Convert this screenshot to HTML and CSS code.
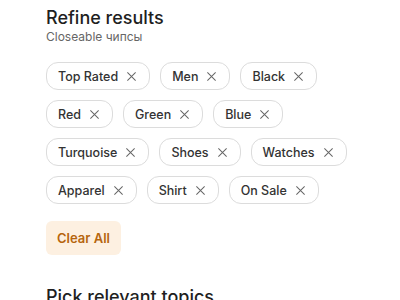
FILE: index.html
```html
<!DOCTYPE html>
<html lang="en">
<head>
  <meta charset="UTF-8" />
  <meta name="viewport" content="width=device-width, initial-scale=1.0"/>
  <title>Refine results</title>
  <link rel="stylesheet" href="styles.css">
</head>
<body>

<div class="section">
  <h2 class="section-title">Refine results</h2>
  <p class="section-sub">Closeable чипсы</p>

  <div class="chips">
    <span class="chip">Top Rated <svg class="chip-close" viewBox="0 0 12 12"><path d="M1.5 1.5l9 9M10.5 1.5l-9 9"/></svg></span>
    <span class="chip">Men <svg class="chip-close" viewBox="0 0 12 12"><path d="M1.5 1.5l9 9M10.5 1.5l-9 9"/></svg></span>
    <span class="chip">Black <svg class="chip-close" viewBox="0 0 12 12"><path d="M1.5 1.5l9 9M10.5 1.5l-9 9"/></svg></span>
    <span class="chip">Red <svg class="chip-close" viewBox="0 0 12 12"><path d="M1.5 1.5l9 9M10.5 1.5l-9 9"/></svg></span>
    <span class="chip">Green <svg class="chip-close" viewBox="0 0 12 12"><path d="M1.5 1.5l9 9M10.5 1.5l-9 9"/></svg></span>
    <span class="chip">Blue <svg class="chip-close" viewBox="0 0 12 12"><path d="M1.5 1.5l9 9M10.5 1.5l-9 9"/></svg></span>
    <span class="chip">Turquoise <svg class="chip-close" viewBox="0 0 12 12"><path d="M1.5 1.5l9 9M10.5 1.5l-9 9"/></svg></span>
    <span class="chip">Shoes <svg class="chip-close" viewBox="0 0 12 12"><path d="M1.5 1.5l9 9M10.5 1.5l-9 9"/></svg></span>
    <span class="chip">Watches <svg class="chip-close" viewBox="0 0 12 12"><path d="M1.5 1.5l9 9M10.5 1.5l-9 9"/></svg></span>
    <span class="chip">Apparel <svg class="chip-close" viewBox="0 0 12 12"><path d="M1.5 1.5l9 9M10.5 1.5l-9 9"/></svg></span>
    <span class="chip">Shirt <svg class="chip-close" viewBox="0 0 12 12"><path d="M1.5 1.5l9 9M10.5 1.5l-9 9"/></svg></span>
    <span class="chip">On Sale <svg class="chip-close" viewBox="0 0 12 12"><path d="M1.5 1.5l9 9M10.5 1.5l-9 9"/></svg></span>
  </div>

  <button class="clear-btn">Clear All</button>
</div>

<div class="section">
  <h2 class="section-title">Pick relevant topics</h2>
</div>

</body>
</html>
```

FILE: styles.css
```css
* { box-sizing: border-box; }

body {
  font-family: Inter, "Noto Sans", sans-serif;
  margin: 0;
  background: white;
  color: #222;
}

.section {
  padding: 0 46px;
  width: 400px;
}

.section-title {
  font-size: 18px;
  font-weight: 500;
  margin: 6px 0 0;
  line-height: 24px;
  color: #1f1f1f;
}

.section-sub {
  font-size: 12px;
  color: #666;
  margin: 0 0 18px;
  line-height: 14px;
}

.chips {
  display: flex;
  flex-wrap: wrap;
  gap: 10px 10px;
}

.chip {
  display: flex;
  align-items: center;
  height: 28px;
  padding: 0 12px 0 11px;
  border: 1px solid #dcdcdc;
  border-radius: 12px;
  font-size: 12.5px;
  font-weight: 500;
  color: #333;
}

.chip-close {
  width: 11px;
  height: 11px;
  margin-left: 8px;
  stroke: #666;
  stroke-width: 1.1;
  fill: none;
}

.clear-btn {
  margin-top: 17px;
  height: 34px;
  padding: 0 11px;
  border: none;
  border-radius: 6px;
  background: #fdf0e1;
  color: #b6650e;
  font-family: inherit;
  font-size: 13px;
  font-weight: 600;
}

.section + .section {
  margin-top: 30px;
}
```
